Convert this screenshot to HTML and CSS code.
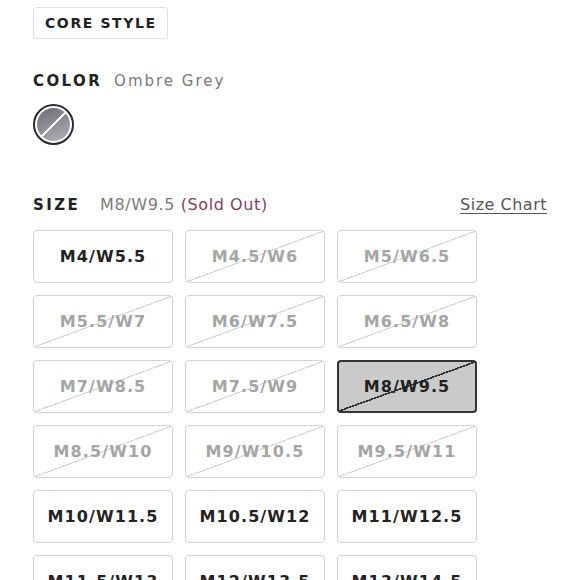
FILE: index.html
```html
<!DOCTYPE html>
<html>
<head>
<meta charset="utf-8">
<link rel="stylesheet" href="styles.css">
</head>
<body>
<div class="page">
  <div class="tag">CORE STYLE</div>
  <div class="color-row">
    <span class="label">COLOR</span>
    <span class="value">Ombre Grey</span>
  </div>
  <div class="swatch"><div class="swatch-inner"></div></div>
  <div class="size-row">
    <div class="size-left">
      <span class="label">SIZE</span>
      <span class="value size-value">M8/W9.5 <span class="sold">(Sold Out)</span></span>
    </div>
    <a class="chart">Size Chart</a>
  </div>
  <div class="grid">
    <div class="opt">M4/W5.5</div>
    <div class="opt out">M4.5/W6</div>
    <div class="opt out">M5/W6.5</div>
    <div class="opt out">M5.5/W7</div>
    <div class="opt out">M6/W7.5</div>
    <div class="opt out">M6.5/W8</div>
    <div class="opt out">M7/W8.5</div>
    <div class="opt out">M7.5/W9</div>
    <div class="opt out selected">M8/W9.5</div>
    <div class="opt out">M8.5/W10</div>
    <div class="opt out">M9/W10.5</div>
    <div class="opt out">M9.5/W11</div>
    <div class="opt">M10/W11.5</div>
    <div class="opt">M10.5/W12</div>
    <div class="opt">M11/W12.5</div>
    <div class="opt">M11.5/W13</div>
    <div class="opt">M12/W13.5</div>
    <div class="opt">M13/W14.5</div>
  </div>
</div>
</body>
</html>
```
FILE: styles.css
```css
html, body {
  margin: 0;
  padding: 0;
  background: #fff;
}
body {
  font-family: "DejaVu Sans", "Liberation Sans", sans-serif;
  color: #222;
  overflow: hidden;
  height: 580px;
}
.page {
  padding: 7px 0 0 33px;
  width: 514px;
}
.tag {
  display: inline-block;
  box-sizing: border-box;
  height: 32px;
  line-height: 30px;
  padding: 0 10px 0 11px;
  border: 1px solid #e0e0e0;
  border-radius: 3px;
  font-size: 14px;
  font-weight: bold;
  letter-spacing: 1.6px;
  color: #222;
}
.color-row {
  margin-top: 33px;
  display: flex;
  align-items: baseline;
  gap: 12px;
  height: 22px;
}
.label {
  font-size: 15px;
  font-weight: bold;
  letter-spacing: 2.4px;
  color: #222;
}
.value {
  font-size: 15px;
  letter-spacing: 2px;
  color: #7a7a7a;
}
.swatch {
  margin-top: 10px;
  width: 41px;
  height: 41px;
  box-sizing: border-box;
  border: 2px solid #2a2a2a;
  border-radius: 50%;
  padding: 2px;
  background: #fff;
}
.swatch-inner {
  width: 100%;
  height: 100%;
  border-radius: 50%;
  background:
    linear-gradient(to bottom right, transparent calc(50% - 1px), #fff calc(50% - 1px), #fff calc(50% + 1px), transparent calc(50% + 1px)),
    linear-gradient(160deg, #6c6d76 0%, #8d8e96 50%, #b3b4ba 100%);
}
.size-row {
  margin-top: 50px;
  display: flex;
  justify-content: space-between;
  align-items: baseline;
  width: 514px;
}
.size-left {
  display: flex;
  align-items: baseline;
  gap: 20px;
}
.size-value {
  font-size: 16px;
  letter-spacing: 0.6px;
}
.sold {
  color: #7f4060;
}
.chart {
  font-size: 16px;
  color: #555;
  text-decoration: underline;
  text-underline-offset: 3px;
  letter-spacing: 0.5px;
}
.grid {
  margin-top: 16px;
  display: grid;
  grid-template-columns: repeat(3, 140px);
  grid-auto-rows: 53px;
  gap: 12px;
}
.opt {
  box-sizing: border-box;
  border: 1.5px solid #d2d2d2;
  border-radius: 4px;
  display: flex;
  align-items: center;
  justify-content: center;
  font-size: 16px;
  font-weight: bold;
  letter-spacing: 1.1px;
  color: #222;
}
.opt.out {
  color: #a5a5a5;
  background: linear-gradient(to bottom right, transparent calc(50% - 0.6px), #d6d6d6 calc(50% - 0.6px), #d6d6d6 calc(50% + 0.6px), transparent calc(50% + 0.6px));
}
.opt.selected {
  border: 2px solid #333;
  color: #222;
  background:
    linear-gradient(to bottom right, transparent calc(50% - 0.8px), #333 calc(50% - 0.8px), #333 calc(50% + 0.8px), transparent calc(50% + 0.8px)),
    #cacaca;
}
```
